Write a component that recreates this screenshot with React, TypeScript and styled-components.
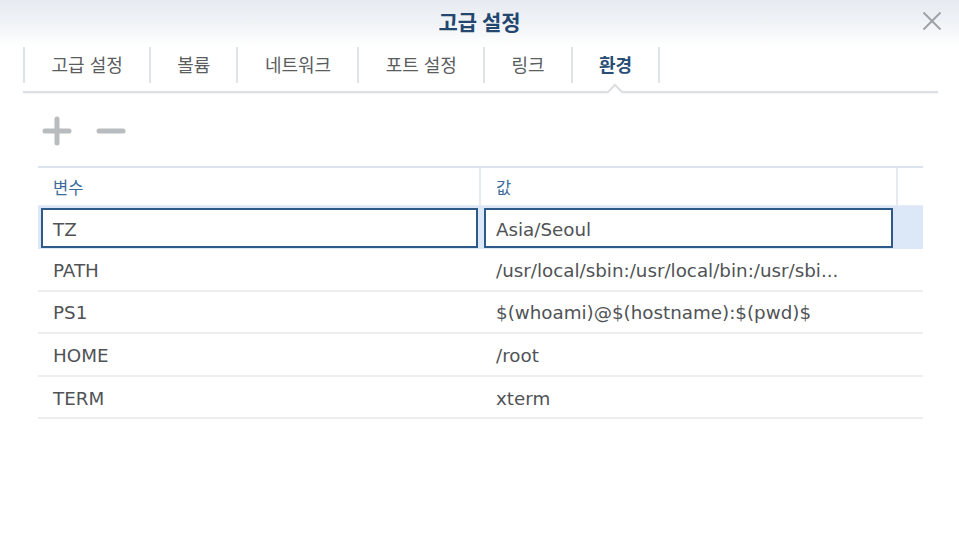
import React from "react";
import styled, { createGlobalStyle } from "styled-components";

const GlobalStyle = createGlobalStyle`
  html, body {
    margin: 0;
    padding: 0;
    background: #ffffff;
  }
  body {
    font-family: "DejaVu Sans", "Noto Sans CJK KR", sans-serif;
  }
`;

const Dialog = styled.div`
  width: 959px;
  height: 551px;
  background: #ffffff;
  display: flex;
  flex-direction: column;
  overflow: hidden;
`;

const Header = styled.div`
  height: 46px;
  display: grid;
  grid-template-columns: 1fr auto 1fr;
  align-items: center;
  background: linear-gradient(to bottom, #e6ebf1 0%, #f3f5f8 60%, #ffffff 100%);
`;

const Title = styled.div`
  grid-column: 2;
  font-family: "Noto Sans CJK KR", sans-serif;
  font-weight: 700;
  font-size: 21px;
  color: #23476f;
  padding-bottom: 5px;
`;

const CloseButton = styled.div`
  grid-column: 3;
  justify-self: end;
  margin-right: 17px;
  margin-bottom: 4px;
  width: 20px;
  height: 20px;
  display: flex;
  align-items: center;
  justify-content: center;
`;

const TabBar = styled.div`
  margin: 0 21px 0 23px;
  padding-top: 1px;
  padding-bottom: 8px;
  display: flex;
  border-bottom: 2px solid #dcdfe2;
  box-shadow: 0 1px 1px rgba(0, 0, 0, 0.04);
`;

const Tab = styled.div<{ $active?: boolean; $last?: boolean }>`
  position: relative;
  height: 36px;
  padding: 0 26px 2px 26.5px;
  box-sizing: border-box;
  display: flex;
  align-items: center;
  border-left: 2px solid #dde3e9;
  ${(p) => (p.$last ? "border-right: 2px solid #dde3e9;" : "")}
  font-family: "Noto Sans CJK KR", sans-serif;
  font-size: 18px;
  word-spacing: 1px;
  font-weight: ${(p) => (p.$active ? 700 : 400)};
  color: ${(p) => (p.$active ? "#2a4d76" : "#5a5d60")};
  &::after {
    content: "";
    display: ${(p) => (p.$active ? "block" : "none")};
    position: absolute;
    left: 50%;
    bottom: -15px;
    width: 10px;
    height: 10px;
    margin-left: -6px;
    background: #ffffff;
    border-top: 2px solid #dcdfe2;
    border-left: 2px solid #dcdfe2;
    transform: rotate(45deg);
  }
`;

const Content = styled.div`
  padding: 0 36px 0 38px;
  display: flex;
  flex-direction: column;
`;

const Toolbar = styled.div`
  height: 73px;
  padding-left: 4px;
  display: flex;
  align-items: center;
  gap: 24px;
  padding-top: 2px;
  box-sizing: border-box;
`;

const IconButton = styled.div`
  width: 30px;
  height: 30px;
  display: flex;
`;

const Table = styled.div`
  display: flex;
  flex-direction: column;
`;

const HeaderRow = styled.div`
  display: grid;
  grid-template-columns: 443px 417px 1fr;
  height: 40px;
  box-sizing: border-box;
  border-top: 2px solid #dbe4ee;
  border-bottom: 1px solid #e6ecf2;
`;

const HeaderCell = styled.div<{ $divider?: boolean }>`
  display: flex;
  align-items: center;
  padding-left: 15px;
  padding-top: 1px;
  font-family: "Noto Sans CJK KR", sans-serif;
  font-size: 16.5px;
  color: #3d6b9b;
  ${(p) => (p.$divider ? "border-right: 2px solid #e4eaf0;" : "")}
`;

const Row = styled.div<{ $selected?: boolean }>`
  display: grid;
  grid-template-columns: 443px 417px 1fr;
  height: ${(p) => (p.$selected ? "43px" : "42.6px")};
  box-sizing: border-box;
  background: ${(p) => (p.$selected ? "#dce8f8" : "#ffffff")};
  border-bottom: ${(p) => (p.$selected ? "none" : "2px solid #eceef0")};
`;

const Cell = styled.div`
  display: flex;
  align-items: center;
  padding-left: 15px;
  padding-top: 2px;
  font-size: 18.3px;
  color: #505356;
  white-space: nowrap;
  overflow: hidden;
`;

const EditCell = styled.div<{ $right: number }>`
  display: flex;
  padding: 2px ${(p) => p.$right}px 1px 3px;
`;

const EditInput = styled.div`
  flex: 1;
  display: flex;
  align-items: center;
  padding-left: 10px;
  padding-top: 2px;
  background: #ffffff;
  border: 2px solid #2e5a87;
  font-size: 18.3px;
  color: #505356;
  white-space: nowrap;
  overflow: hidden;
`;

const PlusIcon = () => (
  <svg width="30" height="30" viewBox="0 0 30 30">
    <line x1="3" y1="15" x2="27" y2="15" stroke="#b8bcbf" strokeWidth="5" strokeLinecap="round" />
    <line x1="15" y1="3" x2="15" y2="27" stroke="#b8bcbf" strokeWidth="5" strokeLinecap="round" />
  </svg>
);

const MinusIcon = () => (
  <svg width="30" height="30" viewBox="0 0 30 30">
    <line x1="3" y1="15" x2="27" y2="15" stroke="#b8bcbf" strokeWidth="5" strokeLinecap="round" />
  </svg>
);

const CloseIcon = () => (
  <svg width="20" height="20" viewBox="0 0 20 20">
    <line x1="1.5" y1="1.5" x2="18.5" y2="18.5" stroke="#9ea2a6" strokeWidth="2" />
    <line x1="18.5" y1="1.5" x2="1.5" y2="18.5" stroke="#9ea2a6" strokeWidth="2" />
  </svg>
);

const tabs = ["고급 설정", "볼륨", "네트워크", "포트 설정", "링크", "환경"];

const rows: [string, string][] = [
  ["PATH", "/usr/local/sbin:/usr/local/bin:/usr/sbi..."],
  ["PS1", "$(whoami)@$(hostname):$(pwd)$"],
  ["HOME", "/root"],
  ["TERM", "xterm"],
];

export default function App() {
  return (
    <>
      <GlobalStyle />
      <Dialog>
        <Header>
          <Title>고급 설정</Title>
          <CloseButton>
            <CloseIcon />
          </CloseButton>
        </Header>
        <TabBar>
          {tabs.map((t, i) => (
            <Tab key={t} $active={t === "환경"} $last={i === tabs.length - 1}>
              {t}
            </Tab>
          ))}
        </TabBar>
        <Content>
          <Toolbar>
            <IconButton>
              <PlusIcon />
            </IconButton>
            <IconButton>
              <MinusIcon />
            </IconButton>
          </Toolbar>
          <Table>
            <HeaderRow>
              <HeaderCell $divider>변수</HeaderCell>
              <HeaderCell $divider>값</HeaderCell>
              <HeaderCell />
            </HeaderRow>
            <Row $selected>
              <EditCell $right={3}>
                <EditInput>TZ</EditInput>
              </EditCell>
              <EditCell $right={5}>
                <EditInput>Asia/Seoul</EditInput>
              </EditCell>
              <Cell />
            </Row>
            {rows.map(([k, v]) => (
              <Row key={k}>
                <Cell>{k}</Cell>
                <Cell>{v}</Cell>
                <Cell />
              </Row>
            ))}
          </Table>
        </Content>
      </Dialog>
    </>
  );
}
